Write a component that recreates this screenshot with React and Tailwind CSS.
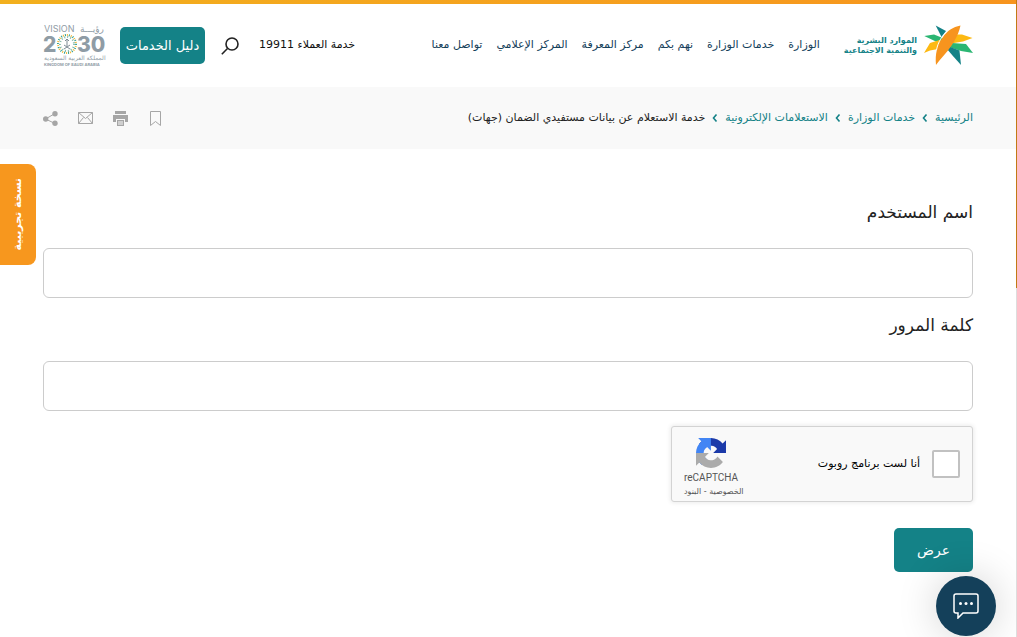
const navLinks = [
  "الوزارة",
  "خدمات الوزارة",
  "نهم بكم",
  "مركز المعرفة",
  "المركز الإعلامي",
  "تواصل معنا",
];

const crumbs = ["الرئيسية", "خدمات الوزارة", "الاستعلامات الإلكترونية"];

function MinistryEmblem() {
  return (
    <svg viewBox="0 0 49 41" className="h-[41px] w-[49px] shrink-0" aria-hidden="true">
      <path d="M11.700.5 22 6 17.500 12Z" fill="#148287" />
      <path d="M.3 11 10 9.500 20 13.500 15 18Z" fill="#2bb673" />
      <path d="M0 28 6 18 17 14.500 14 24 6 25.500Z" fill="#fdb913" />
      <path d="M32 9.500 38 9.500 48.500 13 39 16.500 27 18.500Z" fill="#fdb913" />
      <path d="M28 18 42 19 49 28 37 26 25 22Z" fill="#2bb673" />
      <path d="M25 21.500 35.500 25.500 37 40 28.500 30.500 23 24Z" fill="#148287" />
      <path d="M36.500.5C34 12 28 20 24 25.500c-4 5-8 9-12 14.500C11 29 13 20 19 12 23 6 29 2 36.500.5Z" fill="#f7941e" />
      <path d="M24 5C18 11 14 17 12.500 25" fill="none" stroke="#fff" />
    </svg>
  );
}

function VisionLogo() {
  return (
    <svg viewBox="0 0 64 43" className="h-[43px] w-16 shrink-0" role="img" aria-label="VISION 2030">
      <g fill="#8f9ca5" fontFamily="Inter, sans-serif" direction="ltr">
        <text x="1" y="8" fontSize="9">VISION</text>
        <text x="37" y="8" fontSize="9" fontFamily="DejaVu Sans, sans-serif">رؤيـــة</text>
        <text x="0" y="28" fontSize="21" fontWeight="800">2</text>
        <text x="34" y="28" fontSize="21" fontWeight="800">30</text>
        <text x="1" y="36" fontSize="6" fontFamily="DejaVu Sans, sans-serif">المملكة العربية السعودية</text>
        <text x="1" y="42" fontSize="4" fontWeight="700">KINGDOM OF SAUDI ARABIA</text>
      </g>
      <g fill="none" strokeWidth="2">
        <circle cx="24" cy="20" r="9" stroke="#2e9c8a" strokeDasharray="1 3" />
        <circle cx="24" cy="20" r="9" stroke="#f2b632" strokeDasharray="1 3" strokeDashoffset="2" />
        <circle cx="24" cy="20" r="7" stroke="#7fb7a6" strokeDasharray="1 2" />
      </g>
      <path d="M24 15v7m-3 3 6-4m-6 0 6 4M22 17l2-2 2 2" fill="none" stroke="#7d8b95" />
    </svg>
  );
}

function RecaptchaLogo() {
  return (
    <svg viewBox="0 0 64 64" className="size-[30px]" aria-hidden="true">
      <path d="M64 31.955l-.033-1.37V4.687l-7.16 7.16C50.948 4.674 42.033.093 32.05.093c-10.4 0-19.622 4.96-25.458 12.64l11.736 11.86a15.55 15.55 0 0 1 4.754-5.334c2.05-1.6 4.952-2.906 8.968-2.906.485 0 .86.057 1.135.163 4.976.393 9.288 3.14 11.828 7.124l-8.307 8.307L64 31.953" fill="#1c3aa9" />
      <path d="M31.862.094l-1.37.033H4.594l7.16 7.16C4.58 13.147 0 22.06 0 32.046c0 10.4 4.96 19.622 12.64 25.458L24.5 45.768a15.55 15.55 0 0 1-5.334-4.754c-1.6-2.05-2.906-4.952-2.906-8.968 0-.485.057-.86.163-1.135.393-4.976 3.14-9.288 7.124-11.828l8.307 8.307L31.86.095" fill="#4285f4" />
      <path d="M.001 32.045l.033 1.37v25.898l7.16-7.16c5.86 7.173 14.774 11.754 24.76 11.754 10.4 0 19.622-4.96 25.458-12.64l-11.736-11.86a15.55 15.55 0 0 1-4.754 5.334c-2.05 1.6-4.952 2.906-8.968 2.906-.485 0-.86-.057-1.135-.163-4.976-.393-9.288-3.14-11.828-7.124l8.307-8.307-27.297.001" fill="#ababab" />
    </svg>
  );
}

function SearchIcon() {
  return (
    <svg viewBox="0 0 18 18" className="size-[18px]" fill="none" stroke="#222" strokeWidth="1.600" aria-hidden="true">
      <circle cx="11" cy="7" r="6" />
      <path d="M6.500 11.500.8 17.200" />
    </svg>
  );
}

function Chevron() {
  return (
    <svg viewBox="0 0 6 8" className="h-2 w-[6px]" fill="none" stroke="#148287" strokeWidth="1.600" aria-hidden="true">
      <path d="M4.500.5 1.500 4l3 3.500" />
    </svg>
  );
}

function PageTools() {
  return (
    <div className="flex items-center gap-5 text-[#a6a6a6]">
      <button type="button" aria-label="حفظ" className="flex w-[15px] justify-center">
        <svg viewBox="0 0 11 15" className="h-[15px] w-[11px]" fill="none" stroke="currentColor">
          <path d="M.5.5h10v14l-5-4-5 4Z" />
        </svg>
      </button>
      <button type="button" aria-label="طباعة">
        <svg viewBox="0 0 15 15" className="size-[15px]" fill="currentColor">
          <path d="M2 0h11v3H2ZM0 4h15v7h-3V8H3v3H0ZM4 9h7v6H4Z" />
          <path d="M5 11h5m-5 2h5" stroke="#f9f9f9" />
        </svg>
      </button>
      <button type="button" aria-label="بريد">
        <svg viewBox="0 0 15 12" className="h-3 w-[15px]" fill="none" stroke="currentColor">
          <path d="M.5.5h14v11H.5ZM.5.5l7 6 7-6M.5 11.5l5-6m9 6-5-6" />
        </svg>
      </button>
      <button type="button" aria-label="مشاركة">
        <svg viewBox="0 0 15 15" className="size-[15px]" fill="currentColor">
          <path d="m12 2.500-9.500 5.500 9.500 4.500" fill="none" stroke="currentColor" />
          <circle cx="12" cy="2.700" r="2.700" />
          <circle cx="2.700" cy="8" r="2.700" />
          <circle cx="12" cy="12.300" r="2.700" />
        </svg>
      </button>
    </div>
  );
}

function Header() {
  return (
    <header className="flex h-[83px] items-center ps-11 pe-[43px]">
      <a href="#" className="flex items-center gap-[7px] text-[8px] leading-[10px] font-bold text-[#148287]">
        <MinistryEmblem />
        <span className="whitespace-nowrap">
          الموارد البشرية
          <br />
          والتنمية الاجتماعية
        </span>
      </a>
      <nav className="ms-6 flex gap-[14px] text-[11px] whitespace-nowrap text-[#14405a]">
        {navLinks.map((label) => (
          <a key={label} href="#">
            {label}
          </a>
        ))}
      </nav>
      <div className="ms-auto flex items-center">
        <a href="#" className="text-[11px] whitespace-nowrap text-[#111]">
          خدمة العملاء 19911
        </a>
        <button type="button" aria-label="بحث" className="ms-5">
          <SearchIcon />
        </button>
        <button type="button" className="ms-4 h-[37px] w-[85px] rounded-[5px] bg-[#148287] text-[13px] whitespace-nowrap text-white">
          دليل الخدمات
        </button>
        <a href="#" className="ms-[13px]">
          <VisionLogo />
        </a>
      </div>
    </header>
  );
}

function Breadcrumbs() {
  return (
    <div className="flex h-[62px] items-center justify-between bg-[#f9f9f9] ps-11 pe-[43px]">
      <nav className="flex items-center gap-[7px] text-[11px] whitespace-nowrap">
        {crumbs.map((label) => (
          <span key={label} className="flex items-center gap-[7px]">
            <a href="#" className="text-[#148287]">
              {label}
            </a>
            <Chevron />
          </span>
        ))}
        <span className="text-[#222]">خدمة الاستعلام عن بيانات مستفيدي الضمان (جهات)</span>
      </nav>
      <PageTools />
    </div>
  );
}

function Field({ id, label, type }) {
  return (
    <div className="flex flex-col gap-6">
      <label htmlFor={id} className="text-[17px] leading-6 text-[#222]">
        {label}
      </label>
      <input id={id} type={type} className="h-[50px] w-full rounded-md border border-[#ccc] bg-white px-4 outline-none" />
    </div>
  );
}

function Recaptcha() {
  return (
    <div className="flex h-[76px] w-[302px] items-center justify-between rounded-[3px] border border-[#d3d3d3] bg-[#f9f9f9] px-3 shadow-[0_0_4px_1px_rgba(0,0,0,0.08)]">
      <label className="flex items-center gap-3 text-[11px] text-black">
        <input type="checkbox" className="size-7 appearance-none rounded-[2px] border-2 border-[#c1c1c1] bg-white" />
        أنا لست برنامج روبوت
      </label>
      <div className="flex flex-col items-end pt-2 text-[#555]">
        <div className="flex flex-col items-center gap-1">
          <RecaptchaLogo />
          <span className="font-['Roboto',sans-serif] text-[10px] leading-3">reCAPTCHA</span>
        </div>
        <span className="mt-[2px] text-[8px] leading-3 whitespace-nowrap">
          <a href="#">الخصوصية</a> - <a href="#">البنود</a>
        </span>
      </div>
    </div>
  );
}

export default function App() {
  return (
    <div dir="rtl" className="min-h-screen bg-white font-['DejaVu_Sans',sans-serif]">
      <div className="h-1 bg-linear-to-l from-[#f7941e] to-[#f2b01e]" />
      <Header />
      <Breadcrumbs />
      <main className="ps-11 pe-[43px] pt-[51px]">
        <form className="flex flex-col items-start" onSubmit={(e) => e.preventDefault()}>
          <div className="flex w-full flex-col gap-[15px]">
            <Field id="username" label="اسم المستخدم" type="text" />
            <Field id="password" label="كلمة المرور" type="password" />
            <Recaptcha />
          </div>
          <button type="submit" className="mt-[26px] h-11 w-[79px] rounded-[5px] bg-[#148287] text-sm text-white">
            عرض
          </button>
        </form>
      </main>

      <button type="button" className="fixed top-[164px] left-0 flex h-[101px] w-9 items-center justify-center rounded-r-lg bg-[#f7971e] text-[11px] font-bold text-white">
        <span className="rotate-180 whitespace-nowrap [writing-mode:vertical-rl]">نسخة تجريبية</span>
      </button>

      <button type="button" aria-label="محادثة" className="fixed right-[21px] bottom-px flex size-15 items-center justify-center rounded-full bg-[#14405a] shadow-[0_0_40px_rgba(0,0,0,0.18)]">
        <svg viewBox="0 0 26 26" className="size-[26px]" fill="none" stroke="#fff" strokeWidth="1.500">
          <path d="M3 1h20a2 2 0 0 1 2 2v15a2 2 0 0 1-2 2H10l-5 5v-5H3a2 2 0 0 1-2-2V3a2 2 0 0 1 2-2Z" />
          <g fill="#fff" stroke="none">
            <circle cx="7.500" cy="10.500" r="1.500" />
            <circle cx="13" cy="10.500" r="1.500" />
            <circle cx="18.500" cy="10.500" r="1.500" />
          </g>
        </svg>
      </button>

      {/* scroll progress */}
      <div className="fixed inset-y-0 right-0 w-px bg-[#ddd]">
        <div className="h-[288px] bg-[#c27a14]" />
      </div>
    </div>
  );
}
